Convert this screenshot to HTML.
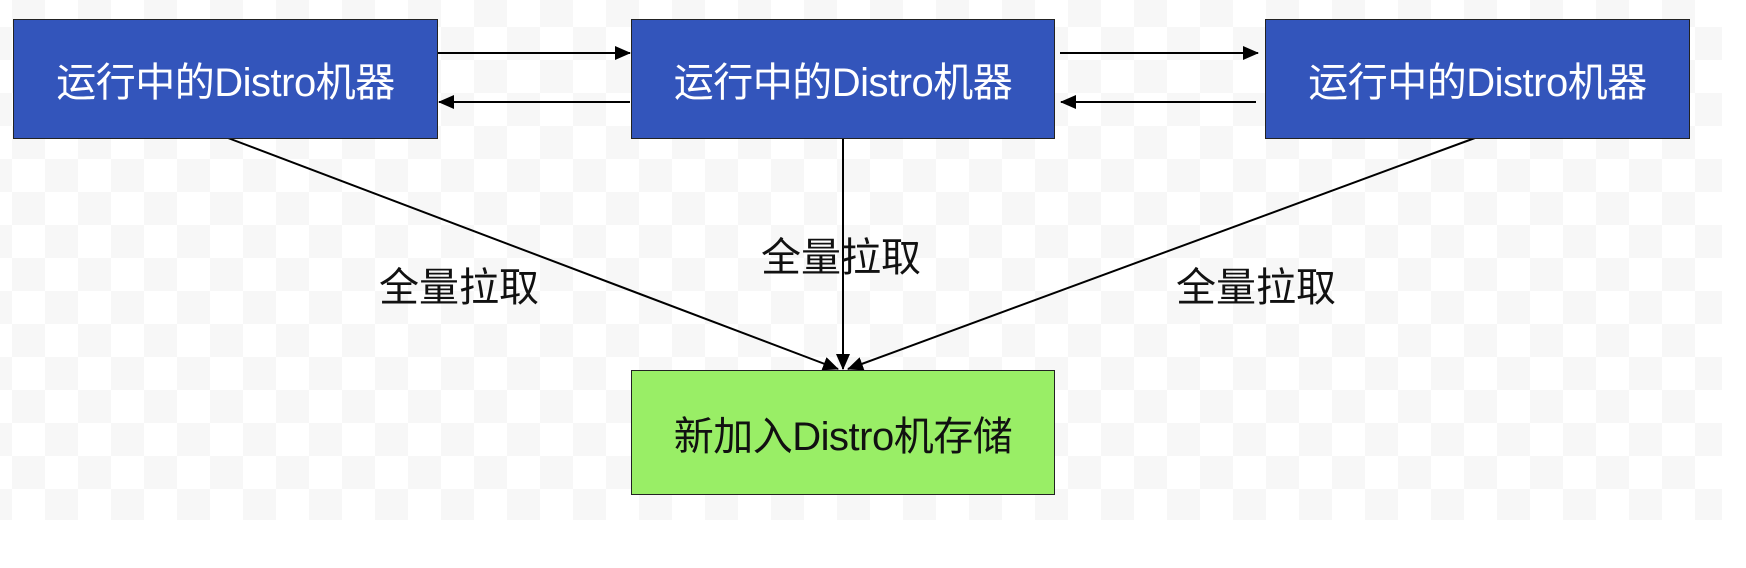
<!DOCTYPE html>
<html><head><meta charset="utf-8"><style>
html,body{margin:0;padding:0;background:#fff;}
body{width:1746px;height:568px;position:relative;overflow:hidden;font-family:"Liberation Sans","Noto Sans CJK SC",sans-serif;}
.chk{position:absolute;left:0;top:0;width:1722px;height:520px;
background-color:#fff;
background-image:linear-gradient(45deg,#f7f7f7 25%,transparent 25%,transparent 75%,#f7f7f7 75%),linear-gradient(45deg,#f7f7f7 25%,transparent 25%,transparent 75%,#f7f7f7 75%);
background-size:66px 66px;background-position:12px 27px,45px 60px;}
.box{position:absolute;box-sizing:border-box;border:1.5px solid #222;display:flex;align-items:center;justify-content:center;font-size:40px;letter-spacing:-0.5px;}
.blue{background:#3355bb;color:#fff;}
.green{background:#99ee66;color:#111;}
.lbl{position:absolute;font-size:40px;color:#111;transform:translate(-50%,-50%);white-space:nowrap;}
svg{position:absolute;left:0;top:0;}
</style></head><body>
<div class="chk"></div>
<svg width="1746" height="568">
<defs><marker id="a" markerWidth="16" markerHeight="14" refX="15" refY="7" orient="auto" markerUnits="userSpaceOnUse"><path d="M0,0 L16,7 L0,14 z" fill="#000"/></marker></defs>
<g stroke="#000" stroke-width="2" fill="none">
<line x1="438" y1="53" x2="630" y2="53" marker-end="url(#a)"/>
<line x1="630" y1="102" x2="439" y2="102" marker-end="url(#a)"/>
<line x1="1060" y1="53" x2="1258" y2="53" marker-end="url(#a)"/>
<line x1="1256" y1="102" x2="1061" y2="102" marker-end="url(#a)"/>
<line x1="228" y1="138" x2="838" y2="369" marker-end="url(#a)"/>
<line x1="843" y1="138" x2="843" y2="369" marker-end="url(#a)"/>
<line x1="1475" y1="138" x2="848" y2="369" marker-end="url(#a)"/>
</g></svg>
<div class="box blue" style="left:13px;top:19px;width:425px;height:120px;">运行中的Distro机器</div>
<div class="box blue" style="left:631px;top:19px;width:424px;height:120px;">运行中的Distro机器</div>
<div class="box blue" style="left:1265px;top:19px;width:425px;height:120px;">运行中的Distro机器</div>
<div class="box green" style="left:631px;top:370px;width:424px;height:125px;">新加入Distro机存储</div>
<div class="lbl" style="left:459px;top:284px;">全量拉取</div>
<div class="lbl" style="left:841px;top:254px;">全量拉取</div>
<div class="lbl" style="left:1256px;top:284px;">全量拉取</div>
</body></html>
